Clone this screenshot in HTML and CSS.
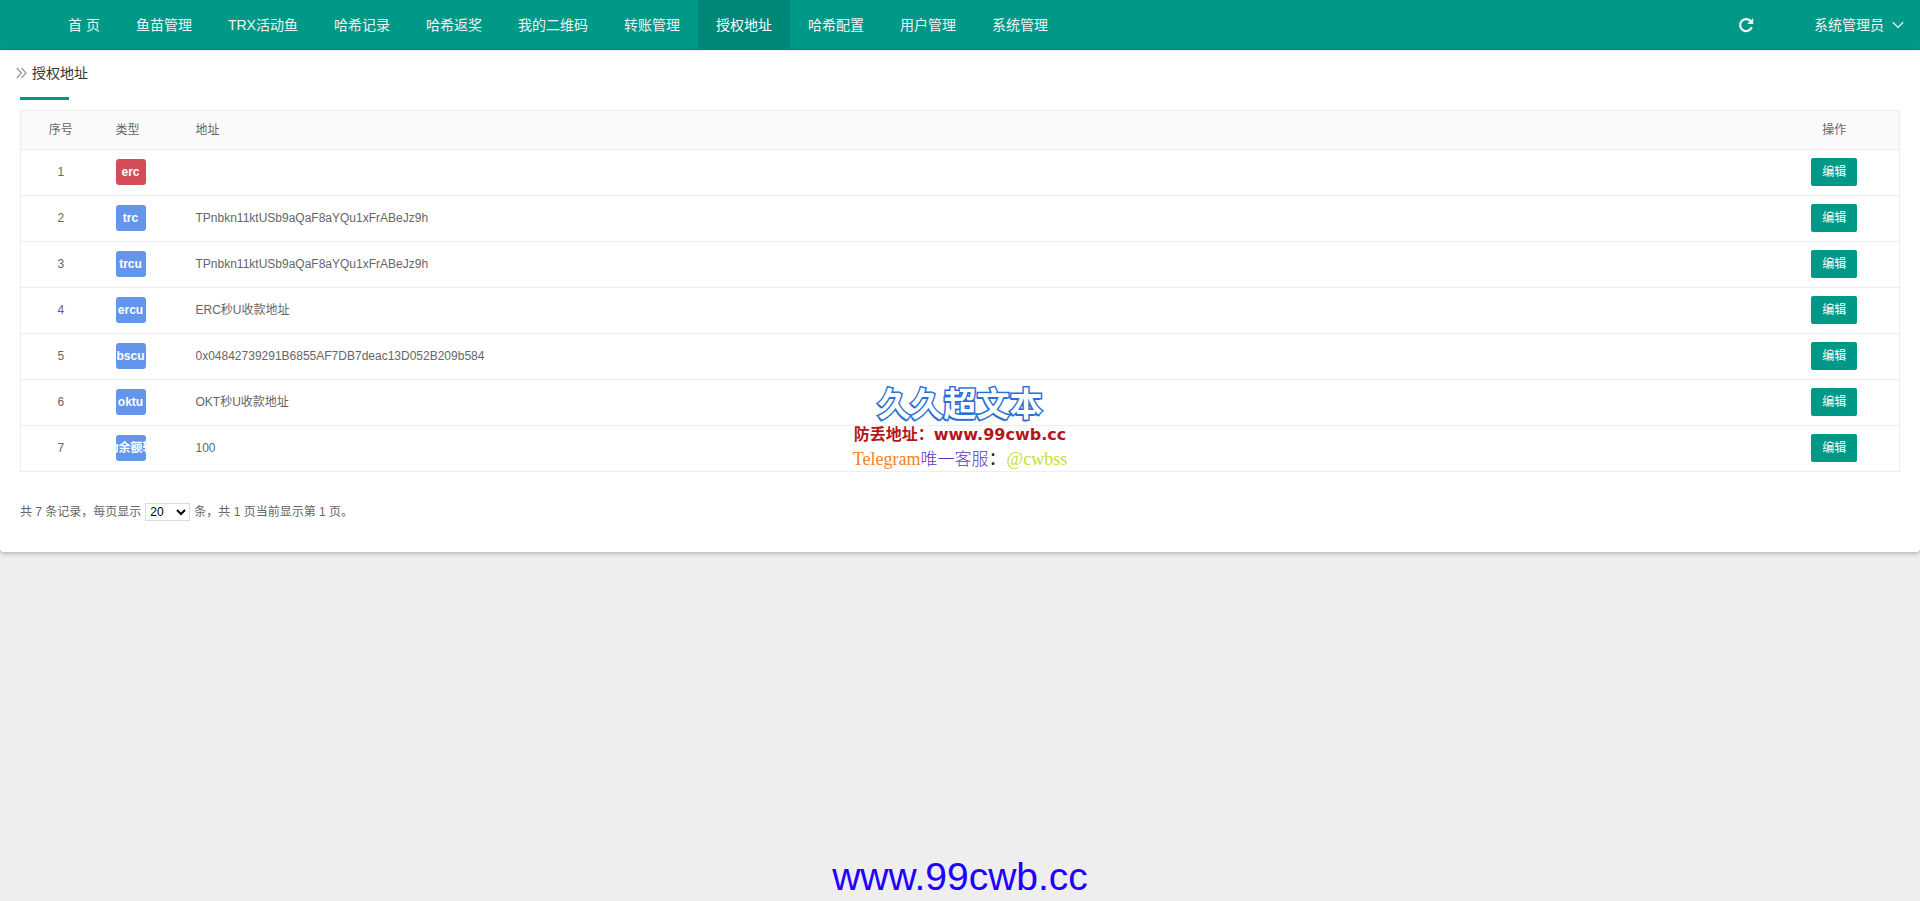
FILE: index.html
```html
<!DOCTYPE html>
<html lang="zh-CN">
<head>
<meta charset="utf-8">
<title>授权地址</title>
<link rel="stylesheet" href="styles.css">
</head>
<body>
<header class="topbar">
  <nav class="nav">
    <a href="#">首 页</a>
    <a href="#">鱼苗管理</a>
    <a href="#">TRX活动鱼</a>
    <a href="#">哈希记录</a>
    <a href="#">哈希返奖</a>
    <a href="#">我的二维码</a>
    <a href="#">转账管理</a>
    <a href="#" class="active" aria-current="page">授权地址</a>
    <a href="#">哈希配置</a>
    <a href="#">用户管理</a>
    <a href="#">系统管理</a>
  </nav>
  <div class="tools">
    <button type="button" class="refresh" aria-label="刷新">
      <svg width="16" height="16" viewBox="0 0 16 16" fill="none"><path d="M13 4.6A6 6 0 1 0 13.8 10.2" stroke="currentColor" stroke-width="2.2"/><path d="M15.2 1v6H9.2z" fill="currentColor"/></svg>
    </button>
    <a href="#" class="user">系统管理员
      <svg width="12" height="8" viewBox="0 0 12 8" fill="none"><path d="M0.8 1.2L6 6.4L11.2 1.2" stroke="currentColor" stroke-width="1.3"/></svg>
    </a>
  </div>
</header>

<main class="card">
  <h1 class="title">
    <svg width="11" height="12" viewBox="0 0 11 12" fill="none"><path d="M0.8 1L5.4 6L0.8 11M5.4 1L10 6L5.4 11" stroke="currentColor" stroke-width="1.3"/></svg>
    授权地址
  </h1>
  <div class="marker"></div>
  <table class="grid">
    <thead>
      <tr><th class="num">序号</th><th class="type">类型</th><th>地址</th><th class="ops">操作</th></tr>
    </thead>
    <tbody>
      <tr><td class="num">1</td><td><span class="tag red">erc</span></td><td></td><td class="ops"><button type="button" class="edit">编辑</button></td></tr>
      <tr><td class="num">2</td><td><span class="tag">trc</span></td><td>TPnbkn11ktUSb9aQaF8aYQu1xFrABeJz9h</td><td class="ops"><button type="button" class="edit">编辑</button></td></tr>
      <tr><td class="num">3</td><td><span class="tag">trcu</span></td><td>TPnbkn11ktUSb9aQaF8aYQu1xFrABeJz9h</td><td class="ops"><button type="button" class="edit">编辑</button></td></tr>
      <tr><td class="num">4</td><td><span class="tag">ercu</span></td><td>ERC秒U收款地址</td><td class="ops"><button type="button" class="edit">编辑</button></td></tr>
      <tr><td class="num">5</td><td><span class="tag">bscu</span></td><td>0x04842739291B6855AF7DB7deac13D052B209b584</td><td class="ops"><button type="button" class="edit">编辑</button></td></tr>
      <tr><td class="num">6</td><td><span class="tag">oktu</span></td><td>OKT秒U收款地址</td><td class="ops"><button type="button" class="edit">编辑</button></td></tr>
      <tr><td class="num">7</td><td><span class="tag">动余额转</span></td><td>100</td><td class="ops"><button type="button" class="edit">编辑</button></td></tr>
    </tbody>
  </table>
  <div class="pager">
    <label for="size">共 7 条记录，每页显示</label>
    <select id="size"><option>20</option><option>50</option><option>100</option></select>
    <span>条，共 1 页当前显示第 1 页。</span>
  </div>
</main>

<aside class="stamp">
  <div class="stamp-name">久久超文本</div>
  <div class="stamp-url">防丢地址：www.99cwb.cc</div>
  <div class="stamp-contact"><span class="orange">Telegram</span><span class="purple">唯一客服</span>：<span class="lime">@cwbss</span></div>
</aside>
<div class="site-url">www.99cwb.cc</div>
</body>
</html>
```
FILE: styles.css
```css
* { box-sizing: border-box; }

body {
  margin: 0;
  min-height: 100vh;
  position: relative;
  background: #eee;
  color: #666;
  font: 12px/18px "Liberation Sans", "Noto Sans CJK SC", sans-serif;
}

a { color: inherit; text-decoration: none; }
button { border: 0; font: inherit; cursor: pointer; }

.topbar {
  display: flex;
  justify-content: space-between;
  height: 50px;
  padding: 0 16px 0 50px;
  background: #009988;
  color: #f2f2f2;
  font-size: 14px;
}
.nav { display: flex; }
.nav a { padding: 0 18px; line-height: 50px; white-space: nowrap; }
.nav .active { background: #008877; color: #fff; }
.tools { display: flex; align-items: center; gap: 60px; }
.refresh { display: flex; padding: 0; background: none; color: inherit; }
.user { display: flex; align-items: center; gap: 8px; }

.card {
  padding: 13px 20px 31px;
  background: #fff;
  border-top: 1px solid #eee;
  border-radius: 0 0 4px 4px;
  box-shadow: 0 1px 5px rgba(0, 0, 0, 0.3);
}
.title {
  display: flex;
  align-items: center;
  gap: 5px;
  margin: 0 -4px;
  color: #333;
  font-size: 14px;
  font-weight: 400;
  line-height: 18px;
}
.title svg { color: #999; }
.marker { width: 49px; height: 3px; margin: 15px 0 10px; background: #009988; }

.grid {
  width: 100%;
  border: 1px solid #eee;
  border-collapse: collapse;
  table-layout: fixed;
}
.grid th, .grid td {
  height: 46px;
  padding: 0 15px 2px;
  border-bottom: 1px solid #eee;
  font-weight: 400;
  text-align: left;
}
.grid th { height: 39px; padding-bottom: 0; background: #fafafa; }
.grid .num { width: 80px; text-align: center; }
.grid .type { width: 80px; }
.grid .ops { width: 130px; text-align: center; }

.tag {
  display: flex;
  justify-content: center;
  width: 30px;
  height: 26px;
  overflow: hidden;
  border-radius: 3px;
  background: #6495ed;
  color: #fff;
  font-weight: 700;
  line-height: 26px;
  white-space: nowrap;
}
.tag.red { background: #d24d57; }
.edit {
  width: 46px;
  height: 28px;
  padding: 0;
  border-radius: 2px;
  background: #009988;
  color: #fff;
}

.pager { display: flex; align-items: center; gap: 4px; margin-top: 31px; }
.pager select {
  width: 45px;
  height: 18px;
  padding: 0;
  border: 1px solid #ddd;
  background: #fff;
  color: #000;
  font: inherit;
  line-height: 16px;
}

.stamp {
  position: absolute;
  top: 385px;
  left: 0;
  right: 0;
  text-align: center;
  white-space: nowrap;
  pointer-events: none;
}
.stamp-name {
  color: #fff;
  font-size: 33px;
  font-weight: 700;
  line-height: 39px;
  -webkit-text-stroke: 3px #2a6fd6;
  paint-order: stroke fill;
  text-shadow: -1px 2px 0 #2a6fd6;
}
.stamp-url {
  color: #b5161b;
  font: 700 16px/22px "DejaVu Sans", "Noto Sans CJK SC", sans-serif;
}
.stamp-contact {
  color: #222;
  font: 18px/26px "Liberation Serif", "Noto Sans CJK SC", serif;
}
.orange { color: #f58220; }
.purple { color: #6233b5; font-size: 17px; font-weight: 300; }
.lime { color: #c8dc32; }

.site-url {
  position: absolute;
  bottom: 2px;
  left: 0;
  right: 0;
  color: #2200ff;
  font-size: 39px;
  line-height: 44px;
  text-align: center;
}
```
